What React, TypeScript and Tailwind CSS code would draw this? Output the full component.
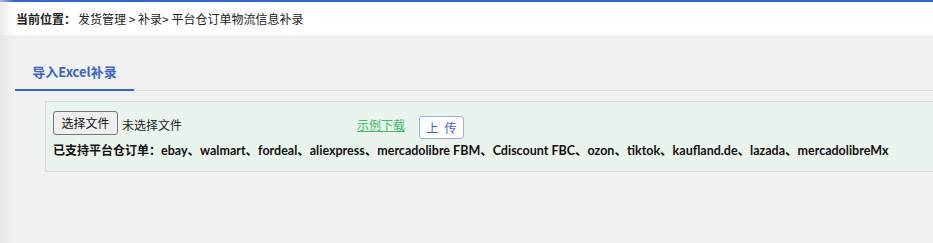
import React from "react";

export default function App() {
  return (
    <div
      className="relative w-[933px] h-[243px] overflow-hidden bg-[#f1f1f1] text-[#333]"
      style={{ fontFamily: '"Noto Sans CJK SC", sans-serif' }}
    >
      <div className="h-[2px] bg-[#3466cc]" />
      <div className="h-[33px] bg-white pl-4 flex items-center text-[12px] text-[#222]">
        <span className="font-bold">当前位置：</span>
        <span className="ml-[2px]">发货管理 &gt; 补录&gt; 平台仓订单物流信息补录</span>
      </div>
      <div className="ml-[15px] mt-[20px] flex border-b border-[#dcdcdc]">
        <div className="w-[119px] h-[36px] flex items-center justify-center text-[13px] font-bold text-[#3a64c8] border-b-2 border-[#3466cc] -mb-px">
          导入Excel补录
        </div>
      </div>
      <div className="ml-[45px] mt-[10px] h-[71px] border border-r-0 border-[#d3ddd6] bg-[#eaf4ed] pl-[7px] pt-[9px]">
        <div className="flex items-end h-[28px]">
          <button className="h-[24px] w-[65px] border border-[#777] rounded-[3px] bg-[#efefef] text-[12px] text-[#111] leading-none mb-[4px]">
            选择文件
          </button>
          <span className="ml-[4px] text-[12px] text-[#222] mb-[8px] leading-none">未选择文件</span>
          <a className="ml-[175px] text-[12px] text-[#3dbd6a] underline mb-[8px] leading-none">示例下载</a>
          <button className="ml-[14px] w-[45px] h-[23px] flex items-center justify-center gap-[6px] border border-[#9aaee8] rounded-[3px] bg-white text-[12px] text-[#3a64c8] leading-none">
            <span>上</span>
            <span>传</span>
          </button>
        </div>
        <div className="mt-[3px] text-[12px] font-bold text-[#111] leading-[16px] whitespace-nowrap">
          <span>已支持平台仓订单：</span>
          <span className="text-[12.5px]" style={{ fontFamily: 'Lato, "Noto Sans CJK SC", sans-serif' }}>
            ebay、walmart、fordeal、aliexpress、mercadolibre FBM、Cdiscount FBC、ozon、tiktok、kaufland.de、lazada、mercadolibreMx
          </span>
        </div>
      </div>
      <div className="pointer-events-none absolute left-0 top-0 h-full w-[14px] bg-gradient-to-r from-[#e2e2e2] to-transparent opacity-70" />
    </div>
  );
}
